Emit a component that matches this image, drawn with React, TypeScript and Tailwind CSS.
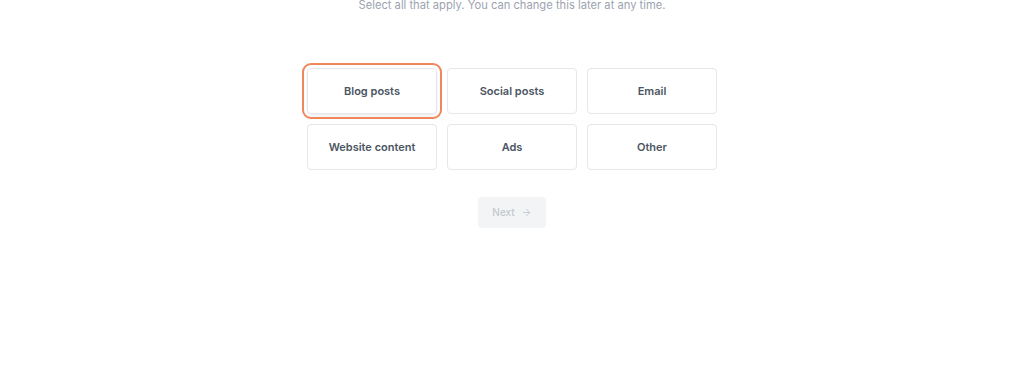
import React from "react";

const options = ["Blog posts", "Social posts", "Email", "Website content", "Ads", "Other"];

export default function App() {
  return (
    <div
      className="w-[1024px] h-[381px] bg-white overflow-hidden flex flex-col items-center"
      style={{ fontFamily: "Inter, 'Noto Sans', sans-serif" }}
    >
      <p className="mt-[-3px] text-[11.2px] leading-[16px] text-[#9ca3af]">
        Select all that apply. You can change this later at any time.
      </p>
      <div className="mt-[55px] grid grid-cols-[130px_130px_130px] gap-[10px]">
        {options.map((o, i) => (
          <button
            key={o}
            className={
              i === 0
                ? "h-[46px] rounded-[4px] border border-[#e5e7eb] bg-white text-[11px] font-semibold text-[#4b5563] outline outline-2 outline-offset-[3px] outline-[#f0875a] shadow-[0_3px_4px_rgba(0,0,0,0.06)]"
                : "h-[46px] rounded-[4px] border border-[#e5e7eb] bg-white text-[11px] font-semibold text-[#4b5563]"
            }
          >
            {o}
          </button>
        ))}
      </div>
      <button className="mt-[27px] w-[68px] h-[31px] rounded-[4px] bg-[#f3f4f6] flex items-center justify-center gap-[6px] text-[10px] font-medium text-[#c4c8cf]">
        Next
        <svg width="11" height="11" viewBox="0 0 24 24" fill="none" stroke="currentColor" strokeWidth="2" strokeLinecap="round" strokeLinejoin="round">
          <path d="M5 12h14" />
          <path d="M12 5l7 7-7 7" />
        </svg>
      </button>
    </div>
  );
}
